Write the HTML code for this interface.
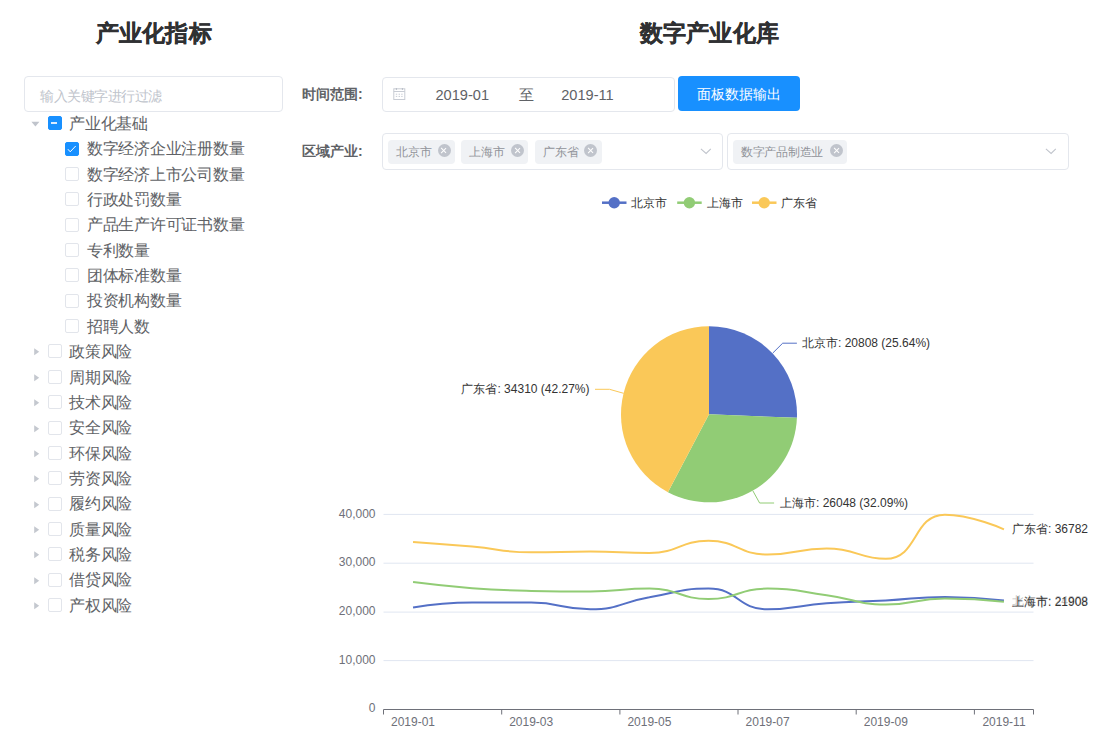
<!DOCTYPE html>
<html><head><meta charset="utf-8">
<style>
html,body{margin:0;padding:0;background:#fff;}
body{width:1114px;height:739px;position:relative;overflow:hidden;font-family:"Liberation Sans",sans-serif;}
.abs{position:absolute;white-space:nowrap;}
.title{position:absolute;font-size:23px;letter-spacing:0.3px;-webkit-text-stroke:0.35px #303133;font-weight:bold;color:#303133;white-space:nowrap;line-height:30px;}
.inp{position:absolute;box-sizing:border-box;border:1px solid #e4e7ed;border-radius:4px;background:#fff;}
.ph{position:absolute;font-size:14px;letter-spacing:-0.5px;color:#c0c4cc;white-space:nowrap;line-height:20px;}
.cb{position:absolute;box-sizing:border-box;width:14px;height:14px;border:1px solid #e2e5eb;border-radius:2px;background:#fff;}
.cb.checked,.cb.indet{background:#1890ff;border-color:#1890ff;}
.tt{position:absolute;font-size:16px;letter-spacing:-0.25px;color:#606266;white-space:nowrap;line-height:22px;}
.caret-r{position:absolute;width:0;height:0;border-top:3.7px solid transparent;border-bottom:3.7px solid transparent;border-left:5px solid #c0c4cc;}
.caret-d{position:absolute;width:0;height:0;border-left:3.8px solid transparent;border-right:3.8px solid transparent;border-top:4.6px solid #c0c4cc;}
.lab{position:absolute;font-size:14px;font-weight:bold;color:#606266;white-space:nowrap;line-height:20px;}
.dt{position:absolute;font-size:14.6px;color:#606266;white-space:nowrap;line-height:20px;}
.btn{position:absolute;box-sizing:border-box;background:#1890ff;border-radius:4px;color:#fff;font-size:14px;text-align:center;}
.tag{position:absolute;box-sizing:border-box;height:24px;background:#f0f2f5;border-radius:4px;}
.tagt{position:absolute;font-size:12px;color:#909399;white-space:nowrap;line-height:16px;}
.tagx{position:absolute;width:13px;height:13px;border-radius:50%;background:#c0c4cc;}
.tagx:before,.tagx:after{content:"";position:absolute;left:2.8px;top:6px;width:7.4px;height:1px;background:#fff;transform:rotate(45deg);}
.tagx:after{transform:rotate(-45deg);}
svg text{font-family:"Liberation Sans",sans-serif;}
.ax{font-size:12px;fill:#6e7079;}
.lb{font-size:12px;fill:#333;}
</style></head><body>
<div class="title" style="left:95.5px;top:18.4px">产业化指标</div>
<div class="title" style="left:639.5px;top:18.4px">数字产业化库</div>
<div class="inp" style="left:24px;top:76px;width:259px;height:36px"></div>
<div class="ph" style="left:40px;top:85.7px">输入关键字进行过滤</div>
<svg width="12" height="12" style="position:absolute;left:29px;top:116.20px"><polygon points="2.4,5.8 10.4,5.8 6.4,10.6" fill="#c0c4cc"/></svg><div class="cb indet" style="left:47.5px;top:116.20px"><div style="position:absolute;left:2.4px;top:4.6px;width:6.3px;height:1.8px;background:#dcecff"></div></div><div class="tt" style="left:69.2px;top:112.90px">产业化基础</div>
<div class="cb checked" style="left:65.2px;top:141.56px"><svg width="14" height="14" style="position:absolute;left:0;top:0"><path d="M1.9 6.2 L4.2 8.8 L9.7 3" fill="none" stroke="#fff" stroke-width="1"/></svg></div><div class="tt" style="left:86.9px;top:138.26px">数字经济企业注册数量</div>
<div class="cb" style="left:65.2px;top:166.92px"></div><div class="tt" style="left:86.9px;top:163.62px">数字经济上市公司数量</div>
<div class="cb" style="left:65.2px;top:192.28px"></div><div class="tt" style="left:86.9px;top:188.98px">行政处罚数量</div>
<div class="cb" style="left:65.2px;top:217.64px"></div><div class="tt" style="left:86.9px;top:214.34px">产品生产许可证书数量</div>
<div class="cb" style="left:65.2px;top:243.00px"></div><div class="tt" style="left:86.9px;top:239.70px">专利数量</div>
<div class="cb" style="left:65.2px;top:268.36px"></div><div class="tt" style="left:86.9px;top:265.06px">团体标准数量</div>
<div class="cb" style="left:65.2px;top:293.72px"></div><div class="tt" style="left:86.9px;top:290.42px">投资机构数量</div>
<div class="cb" style="left:65.2px;top:319.08px"></div><div class="tt" style="left:86.9px;top:315.78px">招聘人数</div>
<svg width="12" height="14" style="position:absolute;left:30px;top:344.44px"><polygon points="4.2,4.3 9.2,7.8 4.2,11.3" fill="#c4c8cf"/></svg><div class="cb" style="left:47.5px;top:344.44px"></div><div class="tt" style="left:69.2px;top:341.14px">政策风险</div>
<svg width="12" height="14" style="position:absolute;left:30px;top:369.80px"><polygon points="4.2,4.3 9.2,7.8 4.2,11.3" fill="#c4c8cf"/></svg><div class="cb" style="left:47.5px;top:369.80px"></div><div class="tt" style="left:69.2px;top:366.50px">周期风险</div>
<svg width="12" height="14" style="position:absolute;left:30px;top:395.16px"><polygon points="4.2,4.3 9.2,7.8 4.2,11.3" fill="#c4c8cf"/></svg><div class="cb" style="left:47.5px;top:395.16px"></div><div class="tt" style="left:69.2px;top:391.86px">技术风险</div>
<svg width="12" height="14" style="position:absolute;left:30px;top:420.52px"><polygon points="4.2,4.3 9.2,7.8 4.2,11.3" fill="#c4c8cf"/></svg><div class="cb" style="left:47.5px;top:420.52px"></div><div class="tt" style="left:69.2px;top:417.22px">安全风险</div>
<svg width="12" height="14" style="position:absolute;left:30px;top:445.88px"><polygon points="4.2,4.3 9.2,7.8 4.2,11.3" fill="#c4c8cf"/></svg><div class="cb" style="left:47.5px;top:445.88px"></div><div class="tt" style="left:69.2px;top:442.58px">环保风险</div>
<svg width="12" height="14" style="position:absolute;left:30px;top:471.24px"><polygon points="4.2,4.3 9.2,7.8 4.2,11.3" fill="#c4c8cf"/></svg><div class="cb" style="left:47.5px;top:471.24px"></div><div class="tt" style="left:69.2px;top:467.94px">劳资风险</div>
<svg width="12" height="14" style="position:absolute;left:30px;top:496.60px"><polygon points="4.2,4.3 9.2,7.8 4.2,11.3" fill="#c4c8cf"/></svg><div class="cb" style="left:47.5px;top:496.60px"></div><div class="tt" style="left:69.2px;top:493.30px">履约风险</div>
<svg width="12" height="14" style="position:absolute;left:30px;top:521.96px"><polygon points="4.2,4.3 9.2,7.8 4.2,11.3" fill="#c4c8cf"/></svg><div class="cb" style="left:47.5px;top:521.96px"></div><div class="tt" style="left:69.2px;top:518.66px">质量风险</div>
<svg width="12" height="14" style="position:absolute;left:30px;top:547.32px"><polygon points="4.2,4.3 9.2,7.8 4.2,11.3" fill="#c4c8cf"/></svg><div class="cb" style="left:47.5px;top:547.32px"></div><div class="tt" style="left:69.2px;top:544.02px">税务风险</div>
<svg width="12" height="14" style="position:absolute;left:30px;top:572.68px"><polygon points="4.2,4.3 9.2,7.8 4.2,11.3" fill="#c4c8cf"/></svg><div class="cb" style="left:47.5px;top:572.68px"></div><div class="tt" style="left:69.2px;top:569.38px">借贷风险</div>
<svg width="12" height="14" style="position:absolute;left:30px;top:598.04px"><polygon points="4.2,4.3 9.2,7.8 4.2,11.3" fill="#c4c8cf"/></svg><div class="cb" style="left:47.5px;top:598.04px"></div><div class="tt" style="left:69.2px;top:594.74px">产权风险</div>
<div class="lab" style="left:302px;top:84px">时间范围:</div>
<div class="inp" style="left:382px;top:77px;width:293px;height:35px"></div>
<svg width="16" height="16" style="position:absolute;left:391px;top:86px"><rect x="2.8" y="2.8" width="11" height="10.7" fill="none" stroke="#c8ccd4" stroke-width="1"/><line x1="2.8" y1="5.5" x2="13.8" y2="5.5" stroke="#c8ccd4" stroke-width="1"/><line x1="5.4" y1="2" x2="5.4" y2="4" stroke="#b8bdc6" stroke-width="1"/><line x1="11.4" y1="2" x2="11.4" y2="4" stroke="#b8bdc6" stroke-width="1"/><g fill="#c8ccd4"><rect x="4.8" y="7.7" width="1.4" height="1"/><rect x="7.6" y="7.7" width="1.4" height="1"/><rect x="10.2" y="7.7" width="1.4" height="1"/><rect x="4.8" y="9.9" width="1.4" height="1"/><rect x="7.6" y="9.9" width="1.4" height="1"/><rect x="10.2" y="9.9" width="1.4" height="1"/></g></svg>
<div class="dt" style="left:435.5px;top:84.5px">2019-01</div>
<div class="dt" style="left:519px;top:85px">至</div>
<div class="dt" style="left:561.2px;top:84.5px">2019-11</div>
<div class="btn" style="left:678px;top:76px;width:122px;height:35px;line-height:37px">面板数据输出</div>
<div class="lab" style="left:302px;top:141.2px">区域产业:</div>
<div class="inp" style="left:382px;top:133px;width:341px;height:37px"></div>
<div class="inp" style="left:727px;top:133px;width:342px;height:37px"></div>
<div class="tag" style="left:388px;top:140px;width:67px"></div>
<div class="tagt" style="left:396px;top:144px">北京市</div>
<div class="tagx" style="left:437.7px;top:144.4px"></div>
<div class="tag" style="left:461px;top:140px;width:67px"></div>
<div class="tagt" style="left:469px;top:144px">上海市</div>
<div class="tagx" style="left:511px;top:144.4px"></div>
<div class="tag" style="left:534.6px;top:140px;width:67.6px"></div>
<div class="tagt" style="left:543px;top:144px">广东省</div>
<div class="tagx" style="left:584.2px;top:144.4px"></div>
<div class="tag" style="left:733px;top:140px;width:113.6px"></div>
<div class="tagt" style="left:741px;top:144px;letter-spacing:-0.3px">数字产品制造业</div>
<div class="tagx" style="left:829.8px;top:144.4px"></div>
<svg width="14" height="10" style="position:absolute;left:699px;top:146px"><path d="M1.9 2.9 L7.1 7.4 L11.8 2.8" fill="none" stroke="#c0c4cc" stroke-width="1.1"/></svg>
<svg width="14" height="10" style="position:absolute;left:1044px;top:146px"><path d="M1.9 2.9 L7.1 7.4 L11.8 2.8" fill="none" stroke="#c0c4cc" stroke-width="1.1"/></svg>
<svg width="1114" height="739" style="position:absolute;left:0;top:0">
<line x1="383.5" y1="660.6" x2="1033.5" y2="660.6" stroke="#e0e6f1" stroke-width="1"/>
<line x1="383.5" y1="612.1" x2="1033.5" y2="612.1" stroke="#e0e6f1" stroke-width="1"/>
<line x1="383.5" y1="563.2" x2="1033.5" y2="563.2" stroke="#e0e6f1" stroke-width="1"/>
<line x1="383.5" y1="514.4" x2="1033.5" y2="514.4" stroke="#e0e6f1" stroke-width="1"/>
<line x1="383.5" y1="709.5" x2="1033.5" y2="709.5" stroke="#6e7079" stroke-width="1"/>
<line x1="383.5" y1="709.5" x2="383.5" y2="714.5" stroke="#6e7079" stroke-width="1"/>
<line x1="501.7" y1="709.5" x2="501.7" y2="714.5" stroke="#6e7079" stroke-width="1"/>
<line x1="619.9" y1="709.5" x2="619.9" y2="714.5" stroke="#6e7079" stroke-width="1"/>
<line x1="738.0" y1="709.5" x2="738.0" y2="714.5" stroke="#6e7079" stroke-width="1"/>
<line x1="856.2" y1="709.5" x2="856.2" y2="714.5" stroke="#6e7079" stroke-width="1"/>
<line x1="974.4" y1="709.5" x2="974.4" y2="714.5" stroke="#6e7079" stroke-width="1"/>
<line x1="1033.5" y1="709.5" x2="1033.5" y2="714.5" stroke="#6e7079" stroke-width="1"/>
<text x="375.5" y="712.4" text-anchor="end" class="ax">0</text>
<text x="375.5" y="663.7" text-anchor="end" class="ax">10,000</text>
<text x="375.5" y="615.2" text-anchor="end" class="ax">20,000</text>
<text x="375.5" y="566.3" text-anchor="end" class="ax">30,000</text>
<text x="375.5" y="517.5" text-anchor="end" class="ax">40,000</text>
<text x="413.0" y="725.5" text-anchor="middle" class="ax">2019-01</text>
<text x="531.2" y="725.5" text-anchor="middle" class="ax">2019-03</text>
<text x="649.4" y="725.5" text-anchor="middle" class="ax">2019-05</text>
<text x="767.6" y="725.5" text-anchor="middle" class="ax">2019-07</text>
<text x="885.8" y="725.5" text-anchor="middle" class="ax">2019-09</text>
<text x="1004.0" y="725.5" text-anchor="middle" class="ax">2019-11</text>
<path d="M413.05 607.40 C413.05 607.40 442.54 602.60 472.14 602.60 C501.63 602.60 501.77 602.60 531.23 602.60 C560.86 602.60 560.97 609.20 590.32 609.20 C620.07 609.20 619.73 602.47 649.41 597.30 C678.82 592.17 679.65 588.60 708.50 588.60 C738.74 588.60 737.27 609.30 767.59 609.30 C796.36 609.30 797.08 605.50 826.68 603.30 C856.17 601.10 856.24 602.07 885.77 600.50 C915.33 598.92 915.32 597.00 944.86 597.00 C974.41 597.00 1003.95 600.50 1003.95 600.50" fill="none" stroke="#5470c6" stroke-width="2" stroke-linejoin="bevel"/>
<path d="M413.05 582.10 C413.05 582.10 442.53 586.00 472.14 588.20 C501.62 590.40 501.67 590.30 531.23 590.90 C560.76 591.50 560.79 591.50 590.32 591.50 C619.88 591.50 620.07 588.60 649.41 588.60 C679.16 588.60 678.95 599.00 708.50 599.00 C738.05 599.00 737.91 588.60 767.59 588.60 C797.00 588.60 797.23 591.24 826.68 595.20 C856.32 599.19 856.12 604.50 885.77 604.50 C915.22 604.50 915.26 598.40 944.86 598.40 C974.36 598.40 1003.95 601.80 1003.95 601.80" fill="none" stroke="#91cc75" stroke-width="2" stroke-linejoin="bevel"/>
<path d="M413.05 541.90 C413.05 541.90 442.61 544.00 472.14 546.60 C501.70 549.20 501.61 552.30 531.23 552.30 C560.71 552.30 560.78 551.60 590.32 551.60 C619.87 551.60 620.17 553.00 649.41 553.00 C679.26 553.00 679.03 540.80 708.50 540.80 C738.12 540.80 737.73 554.50 767.59 554.50 C796.83 554.50 797.28 548.50 826.68 548.50 C856.37 548.50 859.27 558.80 885.77 558.80 C918.36 558.80 912.49 514.70 944.86 514.70 C971.59 514.70 1003.95 529.30 1003.95 529.30" fill="none" stroke="#fac858" stroke-width="2" stroke-linejoin="bevel"/>
<text x="1012" y="533.3" class="lb">广东省: 36782</text>
<text x="1012" y="604.5" class="lb" opacity="0.3">北京市: 24908</text>
<text x="1012" y="605.8" class="lb">上海市: 21908</text>
<path d="M709.0 414.3 L709.00 326.30 A88 88 0 0 1 796.93 417.82 Z" fill="#5470c6" stroke="#fff" stroke-width="0"/>
<path d="M709.0 414.3 L796.93 417.82 A88 88 0 0 1 667.93 492.13 Z" fill="#91cc75" stroke="#fff" stroke-width="0"/>
<path d="M709.0 414.3 L667.93 492.13 A88 88 0 0 1 709.00 326.30 Z" fill="#fac858" stroke="#fff" stroke-width="0"/>
<polyline points="772.8,353 782.7,343.2 796.9,343.2" fill="none" stroke="#5470c6" stroke-width="1"/>
<polyline points="752.8,490.7 759.6,503 774.1,503" fill="none" stroke="#91cc75" stroke-width="1"/>
<polyline points="623.6,393.3 609.5,389.3 595,389.3" fill="none" stroke="#fac858" stroke-width="1"/>
<text x="802" y="347.2" class="lb">北京市: 20808 (25.64%)</text>
<text x="780" y="507" class="lb">上海市: 26048 (32.09%)</text>
<text x="589.5" y="393.3" text-anchor="end" class="lb">广东省: 34310 (42.27%)</text>
<line x1="602.0" y1="202.7" x2="626.5" y2="202.7" stroke="#5470c6" stroke-width="2.5"/>
<circle cx="614.2" cy="202.7" r="5.7" fill="#5470c6"/>
<text x="631.4" y="206.7" class="lb">北京市</text>
<line x1="677.2" y1="202.7" x2="701.7" y2="202.7" stroke="#91cc75" stroke-width="2.5"/>
<circle cx="689.4" cy="202.7" r="5.7" fill="#91cc75"/>
<text x="706.6" y="206.7" class="lb">上海市</text>
<line x1="752.0" y1="202.7" x2="776.5" y2="202.7" stroke="#fac858" stroke-width="2.5"/>
<circle cx="764.2" cy="202.7" r="5.7" fill="#fac858"/>
<text x="781.4" y="206.7" class="lb">广东省</text>
</svg>
</body></html>
